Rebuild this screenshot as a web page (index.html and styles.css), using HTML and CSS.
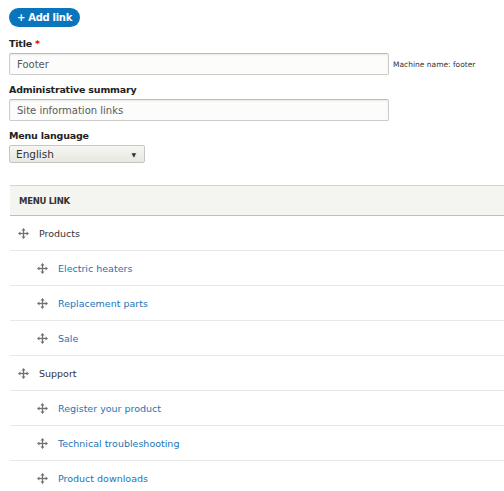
FILE: index.html
```html
<!DOCTYPE html>
<html>
<head>
<meta charset="utf-8">
<link rel="stylesheet" href="styles.css">
</head>
<body>
<div class="page">
  <div class="actions"><a class="btn">+ Add link</a></div>

  <div class="field">
    <div class="label">Title <span class="req">*</span></div>
    <div class="inline">
      <div class="input wide">Footer</div>
      <span class="machine">Machine name: footer</span>
    </div>
  </div>

  <div class="field">
    <div class="label">Administrative summary</div>
    <div class="input wide">Site information links</div>
  </div>

  <div class="field">
    <div class="label">Menu language</div>
    <div class="select">English<span class="arrow">&#9660;</span></div>
  </div>

  <div class="table">
    <div class="thead">MENU LINK</div>
    <div class="row lvl0"><svg class="drag" viewBox="0 0 12 12"><use href="#h"/></svg><span class="txt">Products</span></div>
    <div class="row lvl1"><svg class="drag" viewBox="0 0 12 12"><use href="#h"/></svg><span class="link">Electric heaters</span></div>
    <div class="row lvl1"><svg class="drag" viewBox="0 0 12 12"><use href="#h"/></svg><span class="link">Replacement parts</span></div>
    <div class="row lvl1"><svg class="drag" viewBox="0 0 12 12"><use href="#h"/></svg><span class="link">Sale</span></div>
    <div class="row lvl0"><svg class="drag" viewBox="0 0 12 12"><use href="#h"/></svg><span class="txt">Support</span></div>
    <div class="row lvl1"><svg class="drag" viewBox="0 0 12 12"><use href="#h"/></svg><span class="link">Register your product</span></div>
    <div class="row lvl1"><svg class="drag" viewBox="0 0 12 12"><use href="#h"/></svg><span class="link">Technical troubleshooting</span></div>
    <div class="row lvl1"><svg class="drag" viewBox="0 0 12 12"><use href="#h"/></svg><span class="link">Product downloads</span></div>
  </div>
</div>
<svg width="0" height="0" style="position:absolute">
  <defs>
    <g id="h" fill="#707070">
      <rect x="5.3" y="2" width="1.4" height="8"/>
      <rect x="2" y="5.3" width="8" height="1.4"/>
      <polygon points="6,0 8.2,2.6 3.8,2.6"/>
      <polygon points="6,12 8.2,9.4 3.8,9.4"/>
      <polygon points="0,6 2.6,3.8 2.6,8.2"/>
      <polygon points="12,6 9.4,3.8 9.4,8.2"/>
    </g>
  </defs>
</svg>
</body>
</html>
```
FILE: styles.css
```css
html, body {
  margin: 0;
  padding: 0;
  background: #fff;
}
body {
  font-family: "DejaVu Sans", Verdana, sans-serif;
  color: #333;
  font-size: 10px;
}
.page {
  padding: 8px 0 0 9px;
}
.actions {
  display: flex;
}
.btn {
  display: inline-flex;
  align-items: center;
  justify-content: center;
  height: 19px;
  width: 71px;
  border-radius: 10px;
  background: #0a74bc;
  color: #fff;
  font-weight: bold;
  font-size: 10px;
  letter-spacing: -0.3px;
}
.field {
  margin-top: 11px;
}
.field + .field {
  margin-top: 9px;
}
.label {
  font-weight: bold;
  font-size: 9.5px;
  line-height: 12px;
  color: #222;
  margin-bottom: 3px;
  letter-spacing: -0.2px;
}
.req {
  color: #e00;
}
.inline {
  display: flex;
  align-items: center;
  gap: 4px;
}
.input {
  box-sizing: border-box;
  height: 22px;
  border: 1px solid #ccc;
  border-top-color: #bbb;
  border-radius: 2px;
  background: #fcfcfa;
  box-shadow: inset 0 1px 2px rgba(0,0,0,0.08);
  padding: 0 7px;
  display: flex;
  align-items: center;
  color: #595959;
  font-size: 10px;
}
.wide {
  width: 380px;
}
.machine {
  font-size: 7.5px;
  color: #333;
}
.select {
  box-sizing: border-box;
  width: 136px;
  height: 18px;
  border: 1px solid #c6c6c0;
  border-radius: 2px;
  background: linear-gradient(#f6f6f3, #e8e7e2);
  display: flex;
  align-items: center;
  justify-content: space-between;
  padding: 0 8px 0 6px;
  font-size: 10.5px;
  color: #333;
}
.arrow {
  font-size: 6px;
  color: #333;
}
.table {
  margin-top: 22px;
  margin-left: 1px;
}
.thead {
  box-sizing: border-box;
  height: 31px;
  background: #f4f4f1;
  border-top: 1px solid #d4d4cf;
  border-bottom: 1px solid #bfbfba;
  display: flex;
  align-items: center;
  padding-left: 9px;
  font-weight: bold;
  font-size: 8.5px;
  color: #333;
  letter-spacing: -0.3px;
}
.row {
  box-sizing: border-box;
  height: 35px;
  border-bottom: 1px solid #e9e8e4;
  display: flex;
  align-items: center;
  font-size: 9.5px;
}
.row:last-child {
  border-bottom: none;
}
.lvl0 {
  padding-left: 8px;
}
.lvl1 {
  padding-left: 27px;
}
.drag {
  width: 11px;
  height: 11px;
  margin-right: 10px;
}
.txt {
  color: #333;
}
.link {
  color: #1b74b8;
}
```
